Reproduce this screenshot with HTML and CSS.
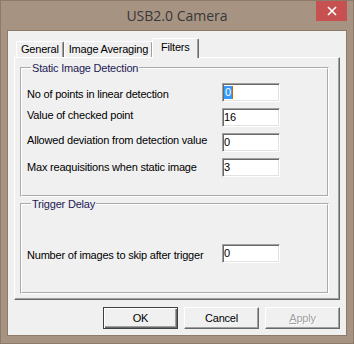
FILE: index.html
```html
<!DOCTYPE html>
<html lang="en">
<head>
    <meta charset="UTF-8">
    <title>USB2.0 Camera</title>
    <link rel="stylesheet" href="styles.css">
</head>
<body>
    <div class="window">
        <div class="titlebar">
            <div class="title">USB2.0 Camera</div>
            <div class="close">
                <svg width="10" height="10" viewBox="0 0 10 10">
                    <path d="M1 1L9 9M9 1L1 9" stroke="#fff" stroke-width="1.7" fill="none"/>
                </svg>
            </div>
        </div>

        <div class="client">
            <div class="tabs">
                <div class="tab">General</div>
                <div class="tab">Image Averaging</div>
                <div class="tab active">Filters</div>
            </div>

            <div class="panel">
                <fieldset class="group group-static">
                    <legend>Static Image Detection</legend>
                    <div class="rows">
                        <div class="row">
                            <span class="lbl lbl-low">No of points in linear detection</span>
                            <span class="field"><span class="sel">0</span></span>
                        </div>
                        <div class="row">
                            <span class="lbl lbl-high">Value of checked point</span>
                            <span class="field">16</span>
                        </div>
                        <div class="row">
                            <span class="lbl lbl-high">Allowed deviation from detection value</span>
                            <span class="field">0</span>
                        </div>
                        <div class="row">
                            <span class="lbl">Max reaquisitions when static image</span>
                            <span class="field">3</span>
                        </div>
                    </div>
                </fieldset>

                <fieldset class="group group-trigger">
                    <legend>Trigger Delay</legend>
                    <div class="row">
                        <span class="lbl lbl-low">Number of images to skip after trigger</span>
                        <span class="field">0</span>
                    </div>
                </fieldset>
            </div>

            <div class="buttons">
                <button class="btn btn-default">OK</button>
                <button class="btn">Cancel</button>
                <button class="btn" disabled><u>A</u>pply</button>
            </div>
        </div>
    </div>
</body>
</html>
```

FILE: styles.css
```css
:root {
    --frame: #a79382;
    --frame-edge: #8e7a69;
    --face: #f0f0f0;
    --shadow: #a0a0a0;
    --dark-shadow: #696969;
    --light: #e3e3e3;
    --group-text: #1d1a55;
}

* {
    box-sizing: border-box;
}

body {
    margin: 0;
    font-family: "Liberation Sans", Arial, sans-serif;
    font-size: 11px;
    letter-spacing: -0.2px;
    color: #000;
}

.window {
    width: 354px;
    height: 344px;
    background: var(--frame);
    border: 1px solid var(--frame-edge);
    padding: 0 6px 7px;
}

.titlebar {
    height: 29px;
    display: grid;
    grid-template-columns: 1fr auto 1fr;
    align-items: start;
}

.title {
    grid-column: 2;
    font-family: "Open Sans", "Noto Sans", sans-serif;
    font-size: 14px;
    letter-spacing: 0;
    line-height: 29px;
    color: #383838;
}

.close {
    grid-column: 3;
    justify-self: end;
    width: 31px;
    height: 20px;
    background: #c75050;
    display: flex;
    align-items: center;
    justify-content: center;
}

.client {
    height: 306px;
    background: var(--face);
    border: 1px solid var(--frame-edge);
    padding: 7px 6px 6px;
}

/* tab strip */
.tabs {
    display: flex;
    align-items: flex-end;
    padding-left: 2px;
}

.tab {
    height: 16px;
    padding: 1px 4px 0;
    line-height: 13px;
    white-space: nowrap;
    border-top: 1px solid #fff;
    border-left: 1px solid #fff;
    border-right: 1px solid var(--dark-shadow);
    box-shadow: inset -1px 0 var(--shadow);
    border-radius: 2px 2px 0 0;
    background: var(--face);
}

.tab.active {
    position: relative;
    z-index: 1;
    height: 20px;
    padding: 2px 8px 0;
    margin: 0 0 -1px -1px;
}

.panel {
    border: 1px solid;
    border-color: #fff var(--dark-shadow) var(--dark-shadow) #fff;
    box-shadow: inset -1px -1px var(--shadow);
    padding: 3px 10px 5px 5px;
}

/* group boxes */
.group {
    margin: 0;
    border: 2px groove #fff;
    min-width: 0;
}

.group legend {
    margin-left: 4px;
    padding: 0 1px;
    line-height: 14px;
    color: var(--group-text);
}

.group-static {
    padding: 8px 5px 18px;
}

.group-trigger {
    padding: 33px 5px 29px;
}

.rows {
    display: flex;
    flex-direction: column;
    gap: 6px;
}

.row {
    display: grid;
    grid-template-columns: 195px 58px;
    align-items: center;
}

.lbl {
    line-height: 13px;
    white-space: nowrap;
}

.lbl-low {
    padding-top: 3px;
}

.lbl-high {
    padding-bottom: 4px;
}

.field {
    height: 19px;
    background: #fff;
    border: 1px solid;
    border-color: var(--shadow) #fff #fff var(--shadow);
    box-shadow: inset 1px 1px var(--dark-shadow), inset -1px -1px var(--light);
    padding: 2px 1px;
    line-height: 13px;
}

.sel {
    display: inline-block;
    padding: 0 1px;
    background: #3399ff;
    color: #fff;
    border-right: 1px solid #cc6600;
}

/* dialog buttons */
.buttons {
    display: flex;
    justify-content: flex-end;
    gap: 6px;
    margin-top: 7px;
}

.btn {
    width: 75px;
    height: 22px;
    padding: 0;
    font: inherit;
    letter-spacing: inherit;
    color: #000;
    background: var(--face);
    border: 1px solid;
    border-color: #fff var(--dark-shadow) var(--dark-shadow) #fff;
    box-shadow: inset -1px -1px var(--shadow);
}

.btn-default {
    border-color: #404040;
    box-shadow: inset 1px 1px #fff, inset -1px -1px var(--dark-shadow), inset -2px -2px var(--shadow);
}

.btn:disabled {
    color: var(--shadow);
    text-shadow: 1px 1px #fff;
}
```
